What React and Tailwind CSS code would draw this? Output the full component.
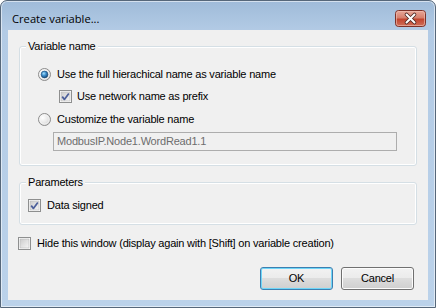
function Radio({ checked }) {
  return (
    <svg width="13" height="13" viewBox="0 0 13 13" className="shrink-0">
      <defs>
        <radialGradient id="radio-fill" cx="0.35" cy="0.35" r="0.75">
          <stop offset="0" stopColor="#ffffff" />
          <stop offset="0.6" stopColor="#e6e6e6" />
          <stop offset="1" stopColor="#c9c9c9" />
        </radialGradient>
        <radialGradient id="radio-dot" cx="0.4" cy="0.35" r="0.7">
          <stop offset="0" stopColor="#a9e1fb" />
          <stop offset="0.45" stopColor="#3d8fce" />
          <stop offset="1" stopColor="#123f6b" />
        </radialGradient>
      </defs>
      <circle cx="6.5" cy="6.5" r="6" fill="url(#radio-fill)" stroke="#8c8c8c" strokeWidth="1" />
      <circle cx="6.5" cy="6.5" r="4.6" fill="none" stroke="#f6f6f6" strokeWidth="0.8" />
      {checked && <circle cx="6.5" cy="6.5" r="3.4" fill="url(#radio-dot)" stroke="#1a4a77" strokeWidth="0.6" />}
    </svg>
  )
}

function Check({ checked }) {
  return (
    <svg width="13" height="13" viewBox="0 0 13 13" className="shrink-0">
      <defs>
        <linearGradient id="check-fill" x1="0" y1="0" x2="1" y2="1">
          <stop offset="0" stopColor="#cbcbcb" />
          <stop offset="1" stopColor="#f6f6f6" />
        </linearGradient>
      </defs>
      <rect x="0.5" y="0.5" width="12" height="12" fill="#ffffff" stroke="#8e8f8f" />
      <rect x="2" y="2" width="9" height="9" fill="url(#check-fill)" stroke="#b7b7b7" strokeWidth="0.6" />
      {checked && (
        <path d="M3.2 6.6 L5.4 9.4 L9.8 3.4" fill="none" stroke="#4c5f9a" strokeWidth="1.7" strokeLinejoin="round" />
      )}
    </svg>
  )
}

function Button({ label, isDefault }) {
  return (
    <div
      className={
        isDefault
          ? 'w-[73px] h-[23px] rounded-[3px] border border-[#3c7fb1] shadow-[inset_0_0_0_1px_#6fd6f8] bg-[linear-gradient(to_bottom,#f2f2f2_0%,#ebebeb_50%,#dddddd_50%,#cfcfcf_100%)] flex items-center justify-center'
          : 'w-[73px] h-[23px] rounded-[3px] border border-[#707070] shadow-[inset_0_0_0_1px_#fcfcfc] bg-[linear-gradient(to_bottom,#f2f2f2_0%,#ebebeb_50%,#dddddd_50%,#cfcfcf_100%)] flex items-center justify-center'
      }
    >
      <span className="text-[11px] leading-[13px] tracking-[-0.2px] text-black">{label}</span>
    </div>
  )
}

function GroupBox({ title, className, children }) {
  return (
    <div className={'relative rounded-[3px] border border-[#d5dfe5] shadow-[inset_0_0_0_1px_#ffffff] ' + className}>
      <span className="absolute left-[6px] top-[-7px] px-[2px] bg-[#f0f0f0] text-[11px] leading-[13px] tracking-[-0.2px] text-black">
        {title}
      </span>
      {children}
    </div>
  )
}

export default function App() {
  return (
    <div className="w-[436px] h-[308px] font-['Liberation_Sans',Arial,sans-serif] bg-white">
      <div className="w-[436px] h-[308px] rounded-t-[7px] border border-[#56677a] shadow-[inset_0_0_0_1px_rgba(255,255,255,0.55)] bg-[linear-gradient(to_bottom,#9fbbd9_0px,#b3cbe5_30px,#bbd2ea_100%)] flex flex-col">

        {/* Title bar */}
        <div className="h-[29px] flex items-start justify-between">
          <span className="pl-[11px] pt-[10px] text-[11.2px] leading-[16px] text-black font-['Open_Sans','Noto_Sans',sans-serif]">
            Create variable...
          </span>
          <div className="mt-[9px] mr-[9px]">
            <svg width="31" height="17" viewBox="0 0 31 17">
              <defs>
                <linearGradient id="close-bg" x1="0" y1="0" x2="0" y2="1">
                  <stop offset="0" stopColor="#e9a99b" />
                  <stop offset="0.45" stopColor="#d6806e" />
                  <stop offset="0.55" stopColor="#c2452f" />
                  <stop offset="1" stopColor="#d0715c" />
                </linearGradient>
              </defs>
              <rect x="0.5" y="0.5" width="30" height="16" rx="3" fill="url(#close-bg)" stroke="#7d3128" />
              <rect x="1.5" y="1.5" width="28" height="14" rx="2" fill="none" stroke="#f1c3b8" strokeOpacity="0.6" />
              <path d="M11.5 4.5 L19.5 12.5 M19.5 4.5 L11.5 12.5" stroke="#4a2420" strokeWidth="3.6" strokeLinecap="round" />
              <path d="M11.5 4.5 L19.5 12.5 M19.5 4.5 L11.5 12.5" stroke="#ffffff" strokeWidth="2" strokeLinecap="round" />
            </svg>
          </div>
        </div>

        {/* Client area */}
        <div className="ml-[7px] w-[420px] h-[270px] bg-[#f0f0f0] pt-[16px] px-[11px] tracking-[-0.2px]">

          <GroupBox title="Variable name" className="h-[120px] pt-[21px] pl-[18px]">
            <div className="flex items-center h-[13px]">
              <Radio checked />
              <span className="ml-[6px] text-[11px] leading-[13px] text-black">
                Use the full hierachical name as variable name
              </span>
            </div>
            <div className="flex items-center h-[13px] mt-[9px] ml-[21px]">
              <Check checked />
              <span className="ml-[5px] text-[11px] leading-[13px] text-black">Use network name as prefix</span>
            </div>
            <div className="flex items-center h-[13px] mt-[10px]">
              <Radio />
              <span className="ml-[6px] text-[11px] leading-[13px] text-black">Customize the variable name</span>
            </div>
            <div className="mt-[6px] ml-[15px] w-[344px] h-[19px] border border-[#adadad] bg-[#f0f0f0] flex items-center pl-[3px]">
              <span className="text-[11px] leading-[13px] text-[#6d6d6d]">ModbusIP.Node1.WordRead1.1</span>
            </div>
          </GroupBox>

          <GroupBox title="Parameters" className="mt-[16px] h-[43px] pt-[16px] pl-[8px]">
            <div className="flex items-center h-[13px]">
              <Check checked />
              <span className="ml-[6px] text-[11px] leading-[13px] text-black">Data signed</span>
            </div>
          </GroupBox>

          <div className="flex items-center h-[13px] mt-[12px] -ml-[1px]">
            <Check />
            <span className="ml-[6px] text-[11px] leading-[13px] text-black">
              Hide this window (display again with [Shift] on variable creation)
            </span>
          </div>

          <div className="flex justify-end gap-[8px] mt-[17px] pr-[3px]">
            <Button label="OK" isDefault />
            <Button label="Cancel" />
          </div>
        </div>
      </div>
    </div>
  )
}
